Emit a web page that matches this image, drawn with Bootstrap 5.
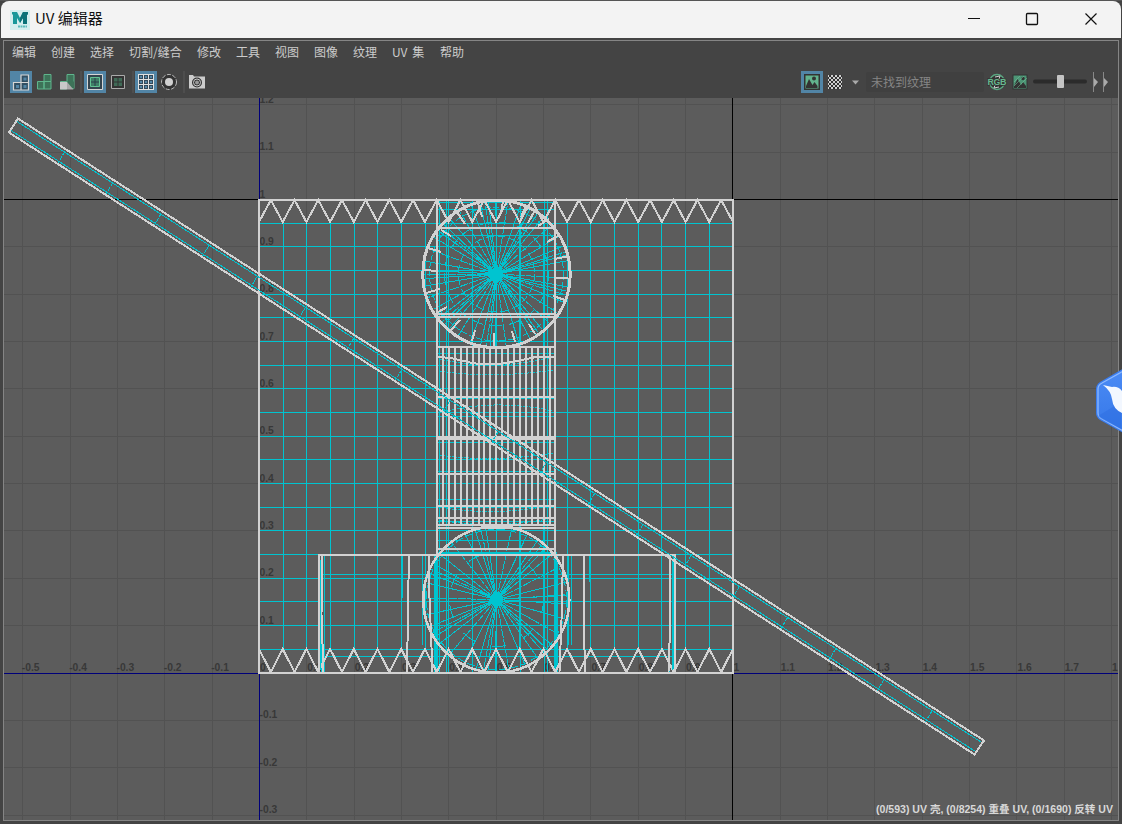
<!DOCTYPE html>
<html lang="zh-CN">
<head>
<meta charset="utf-8">
<title>UV 编辑器</title>
<link rel="stylesheet" href="https://cdn.jsdelivr.net/npm/bootstrap@5.3.0/dist/css/bootstrap.min.css">
<style>
body{width:1122px;height:824px;overflow:hidden;background:#444;font-family:"Liberation Sans","Noto Sans CJK SC",sans-serif}
.shell{width:1122px;height:824px;padding-top:1px;background:linear-gradient(#555 0 1px,#444 1px)}
.titlebar{height:37px;background:#f3f3f3;border-radius:8px 8px 0 0;margin-left:1px;margin-right:1px;padding-left:9px;color:#111}
.caption-text{font:15px "Noto Sans CJK SC",sans-serif;line-height:33px;height:37px;margin-left:5px;width:72px;white-space:nowrap}
.winbtns{gap:40.500px;margin-right:21px;padding-bottom:1px}
.workarea{margin:2px 3px 0 3px;border:1px solid #858585;height:781px}
.menus{height:25px;padding-left:8px;gap:15px;font:12px "Noto Sans CJK SC",sans-serif;line-height:21px;color:#ccc}
.menus span{width:24px;white-space:nowrap}
.tools{height:32px;padding-left:6px}
.tool{width:22px;height:22px;flex:none}
.tool svg{display:block}
.tool.on{background:#5285a6}
.sep{width:2px;height:22px;background:#4e4e4e;flex:none}
.field{width:118px;height:20px;background:#404040;border-radius:2px;color:#858585;font:12px "Noto Sans CJK SC",sans-serif;line-height:20px;padding-left:5px}
.stage{display:block;background:#5c5c5c}
.lbl{font:bold 10.3px "Liberation Sans",sans-serif;fill:#383838}
.status{font:bold 10.3px "Liberation Sans","Noto Sans CJK SC",sans-serif;fill:#d8d8d8}
.helper{position:absolute;left:1095px;top:368px}
</style>
<script src="https://cdn.jsdelivr.net/npm/bootstrap@5.3.0/dist/js/bootstrap.bundle.min.js"></script>
</head>
<body>
<div class="shell">
 <header class="titlebar d-flex align-items-center">
  <svg width="20" height="20" viewBox="0 0 20 20"><rect width="20" height="20" fill="#d3eeee"/><path d="M2 2h5l3 6 3-6h5v2l-1 1v9h-4V8l-3 5-3-5v6H3V5L2 4z" fill="#17989a"/><path d="M13 2h5v2l-1 1v9h-4V8l-3 5V8z" fill="#0b7278"/><path d="M8 16.500h9" stroke="#5cbcbc" stroke-width="2" stroke-dasharray="2 .5"/></svg>
  <div class="caption-text">UV 编辑器</div>
  <div class="winbtns ms-auto d-flex align-items-center">
   <svg width="18" height="14"><path d="M3 6.500h12" stroke="#111"/></svg>
   <svg width="18" height="14"><rect x="2.500" y="1.500" width="11" height="11" rx="1" fill="none" stroke="#111" stroke-width="1.300"/></svg>
   <svg width="18" height="14"><path d="M3.500 1.500l11 11M14.500 1.500l-11 11" stroke="#111" stroke-width="1.200"/></svg>
  </div>
 </header>
 <main class="workarea">
  <nav class="menus d-flex"><span>编辑</span><span>创建</span><span>选择</span><span style="width:53px">切割/缝合</span><span>修改</span><span>工具</span><span>视图</span><span>图像</span><span>纹理</span><span style="width:33px;word-spacing:2px">UV 集</span><span>帮助</span></nav>
  <div class="tools d-flex align-items-center">
   <div class="tool on"><svg width="22" height="22"><path d="M3.500 11.500h7.500v7.500H3.500zM11 11.500h7.500V19H11zM11 4h7.500v7.500H11z" fill="#314f63" stroke="#d5d5d5" stroke-width="1.200"/><path d="M6 14h3v3H6zM13.500 14h3v3h-3zM13.500 6.500h3v3h-3z" fill="#5285a6"/></svg></div>
   <div class="tool ms-1"><svg width="22" height="22"><path d="M1.500 10.500H8V18H1.500zM8 10.500h7V18H8zM8 3.500h7v7H8z" fill="#3d7258" stroke="#5fb58c"/></svg></div>
   <div class="tool"><svg width="22" height="22"><path d="M2.500 10.500h6v7.500h-6zM9 3.500h7v14H9z" fill="#3d7258" stroke="#5fb58c"/><path d="M9 10.500h7v7.500z" fill="#3d7258"/><path d="M2 11h7v7.500H2z" fill="#c9c9c9"/><path d="M9 11l6.500 7.500H9z" fill="#a9a9a9"/></svg></div>
   <i class="sep"></i>
   <div class="tool on" style="margin-left:2px"><svg width="22" height="22"><path d="M3.500 3.500h15v15h-15z" fill="#34444e" stroke="#d5d5d5"/><path d="M6.500 6.500h9v9h-9z" fill="#3f7f68" stroke="#63c293"/><path d="M7 11h8M11 7v8" stroke="#2c3e4a"/></svg></div>
   <div class="tool ms-1"><svg width="22" height="22"><path d="M1.500 4.500h13v13h-13z" fill="#333" stroke="#aaa"/><path d="M4 7h8v8H4z" fill="#3f6a56"/><path d="M4 11h8M8 7v8" stroke="#333"/></svg></div>
   <i class="sep"></i>
   <div class="tool on" style="margin-left:1px"><svg width="22" height="22" shape-rendering="crispEdges"><path d="M3 3h16v16H3z" fill="#e0e0e0"/><path d="M4 4h4v4H4zM9 4h4v4H9zM14 4h4v4h-4zM4 9h4v4H4zM9 9h4v4H9zM14 9h4v4h-4zM4 14h4v4H4zM9 14h4v4H9zM14 14h4v4h-4z" fill="#34495a"/><path d="M5 5h2v2H5zM10 5h2v2h-2zM15 5h2v2h-2zM5 10h2v2H5zM10 10h2v2h-2zM15 10h2v2h-2zM5 15h2v2H5zM10 15h2v2h-2zM15 15h2v2h-2z" fill="#5285a6"/></svg></div>
   <div class="tool ms-1"><svg width="22" height="22"><circle cx="8" cy="11" r="7.500" fill="#333" stroke="#bbb" stroke-dasharray="4 1.500"/><circle cx="8" cy="11" r="4" fill="#d0d0d0"/></svg></div>
   <i class="sep"></i>
   <div class="tool" style="margin-left:3px"><svg width="22" height="22"><path d="M1 4h4l1 1.500h11V17.500H1z" fill="#ccc"/><circle cx="9" cy="11.500" r="5" fill="#333"/><circle cx="9" cy="11.500" r="3.500" fill="none" stroke="#ccc"/><circle cx="9" cy="11.500" r="2" fill="#999"/></svg></div>
   <div class="tool on" style="margin-left:591px"><svg width="22" height="22"><path d="M3 3h16v16H3z" fill="#333"/><path d="M4.500 4.500h13v13h-13z" fill="#62b38d"/><path d="M5 17V15l3-7 3.500 6 2-3 3 4v2z" fill="#333"/><circle cx="13" cy="7.500" r="2" fill="#333"/></svg></div>
   <div class="tool" style="margin-left:4px"><svg width="22" height="22"><defs><pattern id="ck" width="4" height="4" patternUnits="userSpaceOnUse"><rect width="4" height="4" fill="#333"/><path d="M0 0h2v2H0zM2 2h2v2H2z" fill="#d0d0d0"/></pattern></defs><rect x="1" y="4" width="14" height="14" fill="url(#ck)"/></svg></div>
   <div style="width:17px"><svg width="12" height="8"><path d="M3 1.500h7L6.500 5.500z" fill="#aaa"/></svg></div>
   <div class="field">未找到纹理</div>
   <div class="tool" style="margin-left:3px"><svg width="22" height="22"><circle cx="10" cy="11" r="7.500" fill="#333" stroke="#5aa681" stroke-width="1.500"/><path d="M8 6l5-1-1 3M12 16l-5 1 1-3" stroke="#ccc" fill="none"/><text x="0.500" y="14" font-family="Liberation Sans" font-weight="bold" font-size="9" textLength="19" fill="#67b88f" stroke="#333" stroke-width="1.500" paint-order="stroke">RGB</text></svg></div>
   <div class="tool" style="margin-left:2px"><svg width="22" height="22"><path d="M1.500 3.500h15v15h-15z" fill="#333"/><path d="M2.500 4.500h13v13h-13z" fill="#4d9676"/><path d="M3 17v-2l3.500-7 3.500 6 2-3 3 4v2z" fill="#333"/><circle cx="12" cy="7.500" r="1.700" fill="#333"/><path d="M3 15L13 5M6 17L16 7M3 11l6-6" stroke="#79c49d" stroke-width=".5"/></svg></div>
   <div class="tool" style="width:54px"><svg width="54" height="22"><path d="M2 10.500h50" stroke="#2b2b2b" stroke-width="4" stroke-linecap="round"/><rect x="24" y="4" width="7" height="13" rx="1" fill="#c4c4c4"/></svg></div>
   <svg width="24" height="22" style="margin-left:4px"><path d="M2.500 1v20M12.500 1v20" stroke="#888"/><path d="M3 7l4 4-4 5zM13 7l4 4-4 5z" fill="#aaa"/></svg>
  </div>
  <svg class="stage" id="stage" width="1114" height="722" viewBox="4 98 1114 722"></svg>
 </main>
</div>
<svg class="helper" width="27" height="66" viewBox="0 0 27 66"><defs><linearGradient id="hb" x2="0" y2="1"><stop stop-color="#4b8bf5"/><stop offset="1" stop-color="#3577e8"/></linearGradient></defs><path d="M30 -.5L5 14q-4 3-4 7v24q0 4 4 7l25 14z" fill="#3a7df0"/><path d="M30 2L7 15q-4 2-4 6v24q0 4 4 6l23 13z" fill="url(#hb)" stroke="#8db9ff" stroke-width="1.300"/><path d="M3 48L26 34V61L7 51z" fill="#2d6de0" opacity=".45"/><path d="M8 17l9 2q6-1 10 4v22q-9-4-10-14-1-8-9-14z" fill="#f2f7ff"/></svg>
<script>
(() => {
const C='#00c4d0', W='#d2d2d2', out=[];
const line=(x1,y1,x2,y2,c,w=1)=>out.push(`<path d="M${x1} ${y1}L${x2} ${y2}" stroke="${c}" stroke-width="${w}"/>`);
const path=(d,c,w=1,dash='')=>out.push(`<path d="${d}" stroke="${c}" stroke-width="${w}" stroke-dasharray="${dash}"/>`);
const X=u=>259.5+u*473.4, Y=v=>673-v*473.4, px=n=>Math.floor(n)+.5;
// background grid and its numbers
for(let k=-5;k<=18;k++) line(px(X(k/10)),98,px(X(k/10)),820,'#525252');
for(let k=-3;k<=12;k++) line(4,px(Y(k/10)),1118,px(Y(k/10)),'#525252');
line(4,199.5,1118,199.5,'#000');line(732.5,98,732.5,820,'#000');
line(259.5,98,259.5,820,'#00007a');
line(4,673.5,1118,673.5,'#00007a');
const text=(x,y,t)=>out.push(`<text class="lbl" x="${x}" y="${y}" stroke="none">${t}</text>`);
for(let k=-5;k<=18;k++) text(X(k/10)+(k<0?-1:.5),671,String(k/10));
for(let k=-3;k<=12;k++) if(k) text(259.5,Y(k/10)-2,String(k/10));
// plane shell
for(let k=1;k<20;k++){line(px(X(k/20)),223,px(X(k/20)),649,C);line(259,px(Y(k/20)),733,px(Y(k/20)),C);}
// box shell
line(322,574.5,672,574.5,C);line(322,656.5,672,656.5,C);
[321,324,422,425,568,571,669,673].forEach(x=>line(x+.5,556,x+.5,x>400&&x<600?645:672,C));
line(402,556,402,598,C,2);line(590,556,590,582,C,2);
// column, inner edges
[439,446,448,472,496,520,544,547].forEach(x=>line(x+.5,200,x+.5,672,C));
[202,209,235,353,398,416,442,471,499,521,540].forEach(y=>line(438,y+.5,555,y+.5,C));
line(436,553.500,557,553.500,C,3);line(436,555,436,672,C,4);line(556,555,556,672,C,4);
[[371,379,370],[413,398,411],[455,463,453],[507,517,505],[520,530,518],[359,372,357]].forEach(a=>path(`M440 ${a[0]}Q492 ${a[1]} 553 ${a[2]}`,C,1,'5 1'));
// fan shaped caps
function cap(cx,cy,r,n,seed){
  for(let i=0;i<n;i++){
    const a=(i+.6*Math.sin(i*7.3+seed))*2*Math.PI/n, q=r-1;
    path(`M${cx} ${cy}L${(cx+q*Math.cos(a)).toFixed(1)} ${(cy+q*Math.sin(a)).toFixed(1)}`,C,1,i%3?'':'9 1');
  }
  out.push(`<circle cx="${cx}" cy="${cy}" r="6.500" fill="${C}" stroke="none"/>`);
}
cap(496.5,274,73,54,1);cap(496.5,599.500,73,42,4);
const ring=(cy,r,d)=>out.push(`<circle cx="496.5" cy="${cy}" r="${r}" stroke="${C}" stroke-dasharray="${d}"/>`);
ring(274,38,'8 4');ring(274,52,'12 7');ring(274,67,'6 2');
ring(599.5,47,'14 18');ring(599.5,70,'8 3');
// white borders
path('M259 200H733V673H259Z',W,2);
let teethTop='M259 222',teethBottom='M259 649';
for(let k=0;k<20;k++){const x=259+k*23.7;teethTop+=`L${x+11.850} 200L${x+23.700} 222`;teethBottom+=`L${x+11.850} 672L${x+23.700} 649`;}
path(teethTop,W,2);path(teethBottom,W,2);
path('M318.500 673V555H674.500V673',W,2);
path('M322 556L321.500 615L323.500 672M670 556L670.500 615L668.500 672M409 555L408.500 580L407 673M584 555V625L585 673M429 556V585L432.500 672M563 556L561.500 620L559.500 672',W,2);
line(320.5,560,320.5,670,C);line(672.5,560,672.5,670,C);
line(437,200,437,555,W,2);line(555,200,555,555,W,2);
for(let k=1;k<20;k++) line(Math.round(437+k*5.930),347,Math.round(437+k*5.930),524,W,2);
[228,314,317,347,397,474,506,518,525,528,549].forEach(y=>line(437,y,556,y,W,2));
line(437,438,556,438,W,4);line(481,527,513,527,W,4);
path('M438 357L451 358L472 363Q490 366 507 363L536 357H555',W,2);
out.push(`<circle cx="496.5" cy="274" r="73.700" stroke="${W}" stroke-width="3"/><circle cx="496.3" cy="599.5" r="73" stroke="${W}" stroke-width="2.500"/>`);
[[425,270,436,271],[428,248,441,252],[441,230,451,236],[426,293,440,289],[438,312,447,307],[451,330,460,320],[472,341,475,330],[493.5,346,493.5,333],[515,342,512,331],[535,334,529,324],[565,300,553,296],[556,278,568,278],[555,259,569,256],[547,242,558,236],[457,212,465,224],[478,203,482,217],[503,201,501,213],[521,217,526,206],[528,223,535,210],[538,226,549,219]].forEach(a=>line(...a,W,2));
// long diagonal strip
path('M9 132.500L18 118.500L984 740.500L974.500 754.500Z',W,2);
path('M17 121.500L981 742M11 130.500L975.500 751.500',C);
for(let k=0;k<19;k++){const x=64.5+k*48.2,y=152+k*31.04;path(`M${x} ${y}L${x-6.500} ${y+11}`,C,1,'4 1');}
out.push('<text class="status" x="876" y="812.5" textLength="237" lengthAdjust="spacingAndGlyphs" stroke="none">(0/593) UV 壳, (0/8254) 重叠 UV, (0/1690) 反转 UV</text>');
document.getElementById('stage').innerHTML='<g fill="none" shape-rendering="crispEdges">'+out.join('')+'</g>';
})();
</script>
</body>
</html>
